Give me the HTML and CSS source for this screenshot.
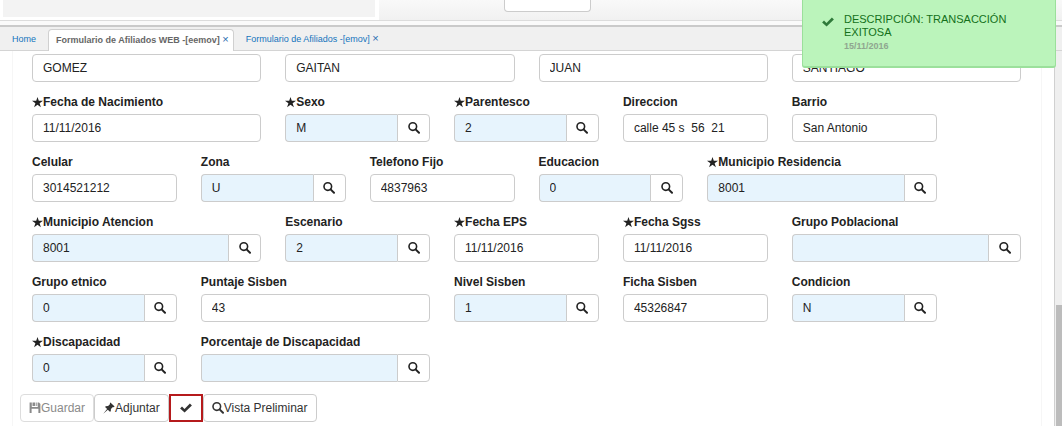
FILE: index.html
```html
<!DOCTYPE html>
<html lang="es">
<head>
<meta charset="utf-8">
<meta name="viewport" content="width=device-width, initial-scale=1">
<title>Formulario de Afiliados</title>
<link rel="stylesheet" href="styles.css">
</head>
<body>
<svg class="sprite" aria-hidden="true">
  <symbol id="search" viewBox="0 0 12 12"><circle cx="4.8" cy="4.6" r="3.8" fill="none" stroke="currentColor" stroke-width="1.6"/><path d="M7.6 7.4 11 10.8" stroke="currentColor" stroke-width="2" stroke-linecap="round"/></symbol>
  <symbol id="star" viewBox="0 0 12 12"><path fill="currentColor" d="M6 0 7.4 4.2H12L8.3 6.8 9.7 11.2 6 8.5 2.3 11.2 3.7 6.8 0 4.2H4.6Z"/></symbol>
  <symbol id="check" viewBox="0 0 12 12"><path fill="currentColor" d="M.1 6.4 2 4.6 4.5 7 9.9 1.6 11.9 3.4 4.6 10.6Z"/></symbol>
  <symbol id="save" viewBox="0 0 12 12"><path fill="currentColor" fill-rule="evenodd" d="M.6.5H2.8V5H8.8V.5H10L11.4 1.9V11H9.4V6.8H2.6V11H.6ZM3.5.5H6.3V4.1H3.5ZM7.3.5H8.2V4.1H7.3Z"/></symbol>
  <symbol id="pin" viewBox="0 0 12 12"><path fill="currentColor" d="M7.4.4 11.6 4.6 10.7 5.2 9.9 4.9 7.9 6.9 7.8 9.3 6.9 9.8 4.8 7.8.3 11.7 4.1 7.1 2.1 5.1 2.7 4.2 5.1 4.1 7.1 2.1 6.8 1.3Z"/></symbol>
</svg>

<header class="topbar">
  <div class="topbar-row">
    <div class="summary"></div>
    <div class="actions"><button class="top-button" type="button" aria-label="Acción"></button></div>
  </div>
</header>

<nav class="tabs">
  <a class="tab" href="#home">Home</a>
  <a class="tab active" href="#eemov">Formulario de Afiliados WEB -[eemov] <span class="close">×</span></a>
  <a class="tab" href="#emov">Formulario de Afiliados -[emov] <span class="close">×</span></a>
</nav>

<div class="workspace">
  <main class="page">
    <form class="panel">
      <div class="grid">
        <div class="field w3"><input class="box" aria-label="Primer apellido" value="GOMEZ"></div>
        <div class="field w3"><input class="box" aria-label="Segundo apellido" value="GAITAN"></div>
        <div class="field w3"><input class="box" aria-label="Primer nombre" value="JUAN"></div>
        <div class="field w3"><input class="box" aria-label="Segundo nombre" value="SANTIAGO"></div>

        <div class="field w3"><label for="nac"><svg class="star"><use href="#star"/></svg>Fecha de Nacimiento</label><input class="box" id="nac" value="11/11/2016"></div>
        <div class="field w2"><label for="sexo"><svg class="star"><use href="#star"/></svg>Sexo</label><div class="lookup"><input class="box" id="sexo" value="M"><button type="button" aria-label="Buscar"><svg class="icon"><use href="#search"/></svg></button></div></div>
        <div class="field w2"><label for="par"><svg class="star"><use href="#star"/></svg>Parentesco</label><div class="lookup"><input class="box" id="par" value="2"><button type="button" aria-label="Buscar"><svg class="icon"><use href="#search"/></svg></button></div></div>
        <div class="field w2"><label for="dir">Direccion</label><input class="box" id="dir" value="calle 45 s  56  21"></div>
        <div class="field w2"><label for="barrio">Barrio</label><input class="box" id="barrio" value="San Antonio"></div>

        <div class="field w2 first"><label for="cel">Celular</label><input class="box" id="cel" value="3014521212"></div>
        <div class="field w2"><label for="zona">Zona</label><div class="lookup"><input class="box" id="zona" value="U"><button type="button" aria-label="Buscar"><svg class="icon"><use href="#search"/></svg></button></div></div>
        <div class="field w2"><label for="tel">Telefono Fijo</label><input class="box" id="tel" value="4837963"></div>
        <div class="field w2"><label for="edu">Educacion</label><div class="lookup"><input class="box" id="edu" value="0"><button type="button" aria-label="Buscar"><svg class="icon"><use href="#search"/></svg></button></div></div>
        <div class="field w3"><label for="res"><svg class="star"><use href="#star"/></svg>Municipio Residencia</label><div class="lookup"><input class="box" id="res" value="8001"><button type="button" aria-label="Buscar"><svg class="icon"><use href="#search"/></svg></button></div></div>

        <div class="field w3 first"><label for="ate"><svg class="star"><use href="#star"/></svg>Municipio Atencion</label><div class="lookup"><input class="box" id="ate" value="8001"><button type="button" aria-label="Buscar"><svg class="icon"><use href="#search"/></svg></button></div></div>
        <div class="field w2"><label for="esc">Escenario</label><div class="lookup"><input class="box" id="esc" value="2"><button type="button" aria-label="Buscar"><svg class="icon"><use href="#search"/></svg></button></div></div>
        <div class="field w2"><label for="eps"><svg class="star"><use href="#star"/></svg>Fecha EPS</label><input class="box" id="eps" value="11/11/2016"></div>
        <div class="field w2"><label for="sgss"><svg class="star"><use href="#star"/></svg>Fecha Sgss</label><input class="box" id="sgss" value="11/11/2016"></div>
        <div class="field w3"><label for="pob">Grupo Poblacional</label><div class="lookup"><input class="box" id="pob" value=""><button type="button" aria-label="Buscar"><svg class="icon"><use href="#search"/></svg></button></div></div>

        <div class="field w2 first"><label for="etn">Grupo etnico</label><div class="lookup"><input class="box" id="etn" value="0"><button type="button" aria-label="Buscar"><svg class="icon"><use href="#search"/></svg></button></div></div>
        <div class="field w3"><label for="pun">Puntaje Sisben</label><input class="box" id="pun" value="43"></div>
        <div class="field w2"><label for="niv">Nivel Sisben</label><div class="lookup"><input class="box" id="niv" value="1"><button type="button" aria-label="Buscar"><svg class="icon"><use href="#search"/></svg></button></div></div>
        <div class="field w2"><label for="fic">Ficha Sisben</label><input class="box" id="fic" value="45326847"></div>
        <div class="field w2"><label for="con">Condicion</label><div class="lookup"><input class="box" id="con" value="N"><button type="button" aria-label="Buscar"><svg class="icon"><use href="#search"/></svg></button></div></div>

        <div class="field w2 first"><label for="dis"><svg class="star"><use href="#star"/></svg>Discapacidad</label><div class="lookup"><input class="box" id="dis" value="0"><button type="button" aria-label="Buscar"><svg class="icon"><use href="#search"/></svg></button></div></div>
        <div class="field w3"><label for="por">Porcentaje de Discapacidad</label><div class="lookup"><input class="box" id="por" value=""><button type="button" aria-label="Buscar"><svg class="icon"><use href="#search"/></svg></button></div></div>
      </div>
      <div class="buttons">
        <button class="btn" type="button" disabled><svg class="icon"><use href="#save"/></svg>Guardar</button>
        <button class="btn" type="button"><svg class="icon"><use href="#pin"/></svg>Adjuntar</button>
        <button class="btn confirm" type="button" aria-label="Confirmar"><svg class="icon"><use href="#check"/></svg></button>
        <button class="btn" type="button"><svg class="icon"><use href="#search"/></svg>Vista Preliminar</button>
      </div>
    </form>
  </main>
  <div class="scrollbar"><div class="thumb"></div></div>
</div>

<div class="toast" role="status">
  <svg class="icon"><use href="#check"/></svg>
  <div class="toast-text">
    <p class="message">DESCRIPCIÓN: TRANSACCIÓN EXITOSA</p>
    <p class="date">15/11/2016</p>
  </div>
</div>
</body>
</html>
```
FILE: styles.css
```css
* { box-sizing: border-box; }

body {
  margin: 0;
  height: 100vh;
  display: flex;
  flex-direction: column;
  overflow: hidden;
  background: #fff;
  color: #222;
  font: 12px/16px "Liberation Sans", Arial, sans-serif;
}

button, input { font: inherit; color: inherit; }

.sprite { position: absolute; width: 0; height: 0; }
.icon { width: 12px; height: 12px; flex: none; }

.topbar {
  flex: none;
  padding-bottom: 4px;
  background: #fafafa;
  border-bottom: 2px solid #cacaca;
}
.topbar-row {
  display: flex;
  height: 21px;
  background: linear-gradient(#f9f9f9, #f1f1f1);
  border-bottom: 1px solid #dcdcdc;
}
.summary {
  width: 379px;
  background: #f3f3f3;
  border: solid #fff;
  border-width: 0 4px 3px 3px;
}
.actions { flex: 1; padding-left: 125px; }
.top-button {
  display: block;
  width: 87px;
  height: 12px;
  background: #fff;
  border: 1px solid #ccc;
  border-top: 0;
  border-radius: 0 0 4px 4px;
}

.tabs {
  flex: none;
  display: flex;
  align-items: flex-end;
  height: 24px;
  padding-left: 4px;
  gap: 4px;
  background: #f0f0f0;
  border-bottom: 1px solid #d4d4d4;
  font-size: 9px;
}
.tab {
  height: 22px;
  padding: 0 8px;
  line-height: 22px;
  color: #1474bd;
  text-decoration: none;
  white-space: nowrap;
}
.tab.active {
  margin-bottom: -1px;
  padding: 0 4px 0 7px;
  line-height: 20px;
  font-weight: bold;
  color: #666;
  background: #fff;
  border: 1px solid #d0d0d0;
  border-bottom: 0;
  border-radius: 4px 4px 0 0;
}
.close { color: #2b6cb0; font-size: 11px; line-height: 1; font-weight: normal; }

.workspace { flex: 1; display: flex; min-height: 0; }
.page { flex: 1; padding: 0 12px; border-right: 1px solid #d0d0d0; }
.panel {
  min-height: 100%;
  padding: 3px 8px 0 7px;
  border: solid #f6f6f6;
  border-width: 0 1px;
}
.scrollbar { width: 7px; display: flex; flex-direction: column; background: #efefef; padding-left: 1px; }
.scrollbar::before { content: ""; flex: 21; }
.thumb { flex: 10; background: #bcbcbc; }

.grid {
  display: grid;
  grid-template-columns: repeat(12, minmax(0, 1fr));
  gap: 12px 24px;
  padding: 0 12px;
}
.w2 { grid-column-end: span 2; }
.w3 { grid-column-end: span 3; }
.first { grid-column-start: 1; }

.field label {
  display: flex;
  align-items: center;
  height: 16px;
  margin-bottom: 4px;
  font-weight: bold;
  white-space: nowrap;
}
.star { width: 11px; height: 11px; flex: none; }
.box {
  display: block;
  width: 100%;
  min-width: 0;
  height: 28px;
  padding: 0 10px;
  background: #fff;
  border: 1px solid #ccc;
  border-radius: 4px;
}
.lookup { display: flex; }
.lookup .box {
  flex: 1;
  background: #e7f4fd;
  border-right: 0;
  border-radius: 4px 0 0 4px;
}
.lookup button {
  flex: none;
  display: flex;
  align-items: center;
  justify-content: center;
  width: 33px;
  padding: 0;
  background: #fff;
  border: 1px solid #ccc;
  border-radius: 0 4px 4px 0;
}

.buttons { display: flex; margin-top: 12px; }
.btn {
  display: flex;
  align-items: center;
  height: 28px;
  padding: 0 8px;
  background: #fff;
  border: 1px solid #ccc;
  border-radius: 4px;
  color: #333;
  white-space: nowrap;
}
.btn:disabled { color: #8a8a8a; border-color: #ddd; }
.btn.confirm { padding: 0 9px; border: 2px solid #b51a1c; border-radius: 0; }

.toast {
  position: fixed;
  top: 0;
  right: 6px;
  width: 254px;
  display: flex;
  gap: 10px;
  padding: 13px 20px 15px 19px;
  background: #bbf4bb;
  border: 1px solid #9be09b;
  border-top: 0;
  border-bottom-width: 2px;
  border-radius: 0 0 3px 3px;
  color: #14701a;
}
.toast .icon { margin-top: 3px; color: #2f7a3a; }
.toast p { margin: 0; }
.message { font-size: 11px; line-height: 13px; }
.date { font-size: 9px; line-height: 14px; font-weight: bold; color: #8fa68f; }
.toast { padding-bottom: 13px; }
```
